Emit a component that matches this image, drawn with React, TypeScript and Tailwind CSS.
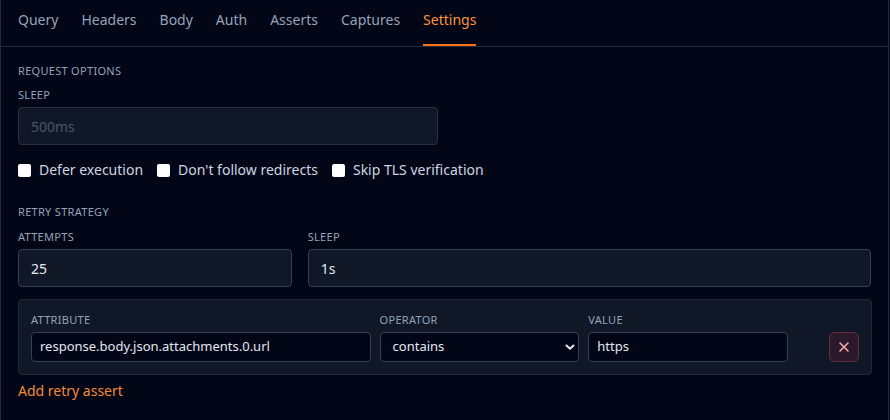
import React from "react";

const font = { fontFamily: '"Noto Sans", "Open Sans", sans-serif' };

function Label({ children, className = "" }: { children: React.ReactNode; className?: string }) {
  return (
    <div className={`text-[11px] leading-4 uppercase tracking-[0.3px] text-[#94a3b8] ${className}`}>{children}</div>
  );
}

function Check({ label }: { label: string }) {
  return (
    <label className="flex items-center gap-2 text-[14px] leading-5 text-[#cbd5e1]">
      <span className="w-[13px] h-[13px] rounded-[2px] bg-white inline-block" />
      <span>{label}</span>
    </label>
  );
}

export default function App() {
  const tabs = ["Query", "Headers", "Body", "Auth", "Asserts", "Captures", "Settings"];
  return (
    <div className="w-[890px] h-[420px] bg-[#020617]" style={font}>
      <div className="w-[889px] h-[420px] border-x border-[#1e293b]">
        <div className="flex gap-[23px] px-[17px] h-[47px] border-b border-[#1e293b]">
          {tabs.map((t) => (
            <div
              key={t}
              className={`relative flex items-center h-full text-[14px] ${
                t === "Settings" ? "text-[#fb923c]" : "text-[#94a3b8]"
              }`}
            >
              <span className="-mt-[7px]">{t}</span>
              {t === "Settings" && (
                <span className="absolute left-0 right-0 bottom-0 h-[2px] bg-[#f97316]" />
              )}
            </div>
          ))}
        </div>

        <div className="px-[17px] pt-[16px]">
          <Label>Request options</Label>
          <Label className="mt-[8px]">Sleep</Label>
          <div className="mt-[4px] w-[420px] h-[38px] rounded-[4px] border border-[#263244] bg-[#101828] flex items-center px-[12px] text-[14px] text-[#475569]">
            500ms
          </div>
          <div className="mt-[15px] flex gap-[14px]">
            <Check label="Defer execution" />
            <Check label="Don't follow redirects" />
            <Check label="Skip TLS verification" />
          </div>

          <Label className="mt-[24px]">Retry strategy</Label>
          <div className="mt-[9px] flex gap-[16px]">
            <div className="w-[274px]">
              <Label>Attempts</Label>
              <div className="mt-[4px] h-[38px] rounded-[4px] border border-[#334155] bg-[#101828] flex items-center px-[12px] text-[14px] text-[#e2e8f0]">
                25
              </div>
            </div>
            <div className="w-[564px]">
              <Label>Sleep</Label>
              <div className="mt-[4px] h-[38px] rounded-[4px] border border-[#334155] bg-[#101828] flex items-center px-[12px] text-[14px] text-[#e2e8f0]">
                1s
              </div>
            </div>
          </div>

          <div className="mt-[12px] w-[854px] rounded-[4px] border border-[#1e293b] bg-[#101828] px-[12px] pt-[12px] pb-[12px] flex items-end">
            <div className="w-[340px]">
              <Label>Attribute</Label>
              <div className="mt-[4px] h-[30px] rounded-[4px] border border-[#334155] bg-[#020617] flex items-center px-[8px] text-[13px] text-[#e2e8f0]">
                response.body.json.attachments.0.url
              </div>
            </div>
            <div className="w-[200px] ml-[9px]">
              <Label>Operator</Label>
              <div className="mt-[4px] h-[30px] rounded-[4px] border border-[#334155] bg-[#020617] flex items-center justify-between pl-[12px] pr-[2px] text-[13px] text-[#e2e8f0]">
                <span>contains</span>
                <svg width="12" height="12" viewBox="0 0 12 12">
                  <path d="M2.5 4.5 L6 7.8 L9.5 4.5" stroke="#e2e8f0" strokeWidth="2" fill="none" strokeLinecap="round" strokeLinejoin="round" />
                </svg>
              </div>
            </div>
            <div className="w-[200px] ml-[9px]">
              <Label>Value</Label>
              <div className="mt-[4px] h-[30px] rounded-[4px] border border-[#334155] bg-[#020617] flex items-center px-[8px] text-[13px] text-[#e2e8f0]">
                https
              </div>
            </div>
            <div className="ml-[41px] w-[30px] h-[30px] rounded-[5px] border border-[#6b2a3a] bg-[#2a1a2c] flex items-center justify-center">
              <svg width="12" height="12" viewBox="0 0 12 12">
                <path d="M2 2 L10 10 M10 2 L2 10" stroke="#fca5a5" strokeWidth="1.6" strokeLinecap="round" />
              </svg>
            </div>
          </div>

          <div className="mt-[6px] text-[14px] leading-5 text-[#f28c38]">Add retry assert</div>
        </div>
      </div>
    </div>
  );
}
